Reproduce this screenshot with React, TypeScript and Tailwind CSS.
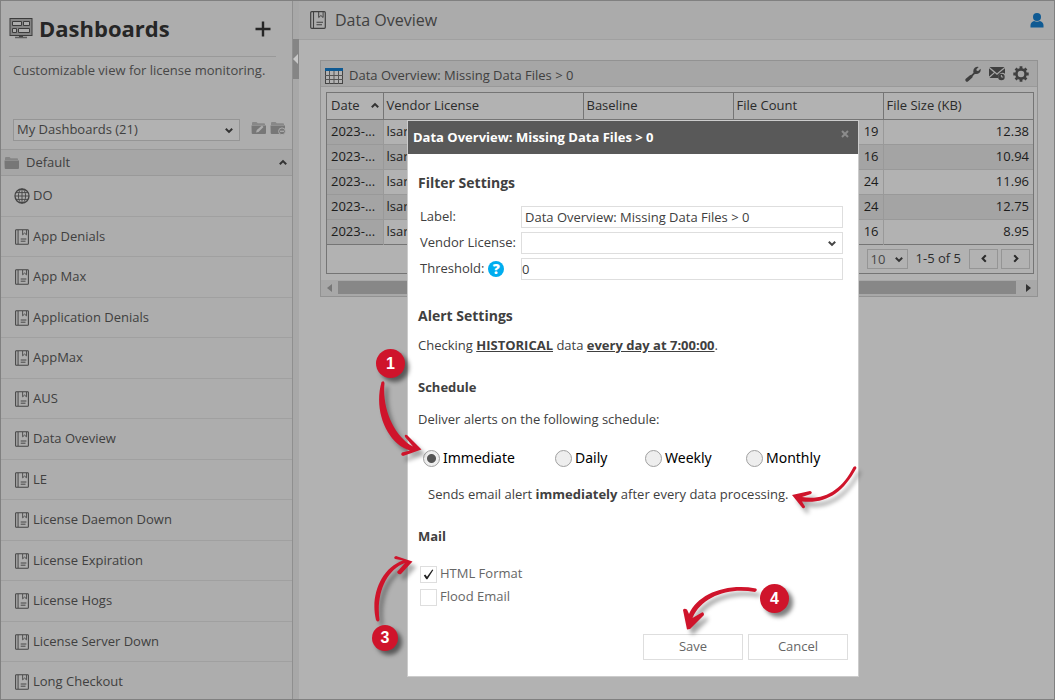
import { useState } from "react";
import type { ReactNode } from "react";

const dashboards = [
  "DO",
  "App Denials",
  "App Max",
  "Application Denials",
  "AppMax",
  "AUS",
  "Data Oveview",
  "LE",
  "License Daemon Down",
  "License Expiration",
  "License Hogs",
  "License Server Down",
  "Long Checkout",
];

const rows = [
  { count: 19, size: "12.38" },
  { count: 16, size: "10.94" },
  { count: 24, size: "11.96" },
  { count: 24, size: "12.75" },
  { count: 16, size: "8.95" },
];

function BookIcon({ className }: { className: string }) {
  return (
    <svg viewBox="0 0 16 18" className={className} fill="none" stroke="currentColor">
      <rect x="0.7" y="0.7" width="14.6" height="16.6" rx="1" strokeWidth="1.2" />
      <path d="M3.5 1v16" strokeWidth="1.1" />
      <path d="M8.7 1v5.500l2.200-2 2.200 2V1" />
      <path d="M6.500 11.3h6.500M6.500 13.8h5.500" strokeWidth="1.1" />
    </svg>
  );
}

function GlobeIcon() {
  return (
    <svg viewBox="0 0 16 16" className="size-4" fill="none" stroke="currentColor" strokeWidth="0.9">
      <circle cx="8" cy="8" r="7" strokeWidth="1.3" />
      <ellipse cx="8" cy="8" rx="3.6" ry="7" />
      <path d="M8 1v14M1 8h14M2 4.6h12M2 11.4h12" />
    </svg>
  );
}

function DashboardIcon() {
  return (
    <svg viewBox="0 0 24 21" className="h-[21px] w-6 shrink-0">
      <rect x="1" y="0.5" width="22" height="17" fill="#858585" stroke="#3c3c3c" />
      <path
        d="M3.500 3.500h9v4h-9zM14.500 3.500h6v4h-6zM3.500 10.500h4v4h-4zM9.500 10.500h11v4h-11z"
        fill="#adadad"
        stroke="#3c3c3c"
      />
      <path d="M10 17.500h4v1.500h-4z" fill="#3c3c3c" />
      <path d="M6 19.500h12" stroke="#5c5c5c" strokeWidth="1.500" />
    </svg>
  );
}

function FolderIcon({ badge }: { badge?: ReactNode }) {
  return (
    <svg viewBox="0 0 16 14" className="h-[14px] w-4" fill="currentColor">
      <path d="M1 4V2q0-1 1-1h3.500l1.200 1.300h6.300q1 0 1 1V4z" opacity="0.7" />
      <path d="M0.500 4.500h14.500v7.500q0 1-1 1H1.700q-1 0-1-1z" />
      {badge}
    </svg>
  );
}

function Chevron({ className }: { className: string }) {
  return (
    <svg viewBox="0 0 8 6" className={className} fill="none" stroke="currentColor" strokeWidth="2">
      <path d="M0.800 1.200 4 4.400 7.200 1.200" />
    </svg>
  );
}

function WrenchIcon() {
  return (
    <svg viewBox="0 0 16 16" className="size-4" fill="currentColor">
      <path d="M0.800 15.200q-1-1.200 0-2.400L5 9.200l1.500-0.400 2-2q-0.800-3 1.300-5Q11.500 0.300 13.700 0.900L11.400 3.200l0.300 1.500 1.500 0.300 2.300-2.300q0.700 2.300-1 4-1.900 1.800-4.700 1.200l-2 2-0.400 1.500-4.200 3.800q-1.200 1-2.400 0z" />
    </svg>
  );
}

function MailClockIcon() {
  return (
    <svg viewBox="0 0 16 15" className="h-[15px] w-4">
      <path d="M0.500 1h15L8 7.200z" fill="#3f3f3f" />
      <path d="M0 2.200 4.900 6.400 0 10.500zM5.800 7.100 8 8.900l2.200-1.800L16 2.200v5.500a4.300 4.300 0 0 0-6.800 4.300H0.500z" fill="#3f3f3f" />
      <circle cx="12.400" cy="11" r="3.300" fill="#3f3f3f" />
      <path d="M12.400 9v2h1.800" stroke="#a6a6a6" fill="none" />
    </svg>
  );
}

function GearIcon() {
  return (
    <svg viewBox="0 0 16 16" className="size-4" fill="none" stroke="currentColor">
      <circle cx="8" cy="8" r="4.600" strokeWidth="2.600" />
      <path
        d="M8 0.300v2.500M8 13.200v2.500M0.300 8h2.500M13.200 8h2.500M2.600 2.600l1.700 1.700M11.700 11.700l1.700 1.700M2.600 13.400l1.700-1.700M11.700 4.300l1.700-1.700"
        strokeWidth="2.800"
      />
    </svg>
  );
}

function Sidebar() {
  return (
    <aside className="flex w-[292px] shrink-0 flex-col overflow-hidden border-r border-[#8f8f8f] bg-[#adadad]">
      <div className="mr-4 ml-2 flex h-14 shrink-0 items-center border-b border-[#999] pr-[5px] text-[#262626]">
        <DashboardIcon />
        <h1 className="ml-[6px] flex-1 text-[22px] font-bold">Dashboards</h1>
        <button aria-label="Add dashboard" className="p-0">
          <svg viewBox="0 0 16 16" className="size-4" stroke="currentColor" strokeWidth="2.400">
            <path d="M8 0.500v15M0.500 8h15" />
          </svg>
        </button>
      </div>
      <p className="px-3 pt-[3px] leading-5 text-[#474747]">Customizable view for license monitoring.</p>
      <div className="mt-[39px] flex shrink-0 items-center pb-2 pl-3">
        <div className="relative w-[227px] shrink-0">
          <select aria-label="Dashboard group" className="block h-[22px] w-full appearance-none border border-[#959595] bg-[#b2b2b2] px-[3px]">
            <option>My Dashboards (21)</option>
          </select>
          <Chevron className="pointer-events-none absolute top-2 right-[7px] h-[7px] w-2 text-[#333]" />
        </div>
        <div className="mb-1 ml-[11px] flex shrink-0 gap-[3px] text-[#777]">
          <button aria-label="Edit folder">
            <FolderIcon badge={<path d="m5 11.500 0.800-2.500L11 4.500l1.500 1.500-5 5z" fill="#adadad" />} />
          </button>
          <button aria-label="Remove folder">
            <FolderIcon
              badge={
                <>
                  <circle cx="12" cy="10.300" r="3.400" fill="#777" stroke="#adadad" />
                  <path d="M10 10.300h4" stroke="#adadad" strokeWidth="1.200" />
                </>
              }
            />
          </button>
        </div>
      </div>
      <button className="flex h-[27px] shrink-0 items-center border-y border-[#999] bg-[#a6a6a6] pr-[5px] pl-[3px] text-left">
        <span className="text-[#777]">
          <FolderIcon />
        </span>
        <span className="ml-[6px] flex-1">Default</span>
        <Chevron className="h-[7px] w-2 rotate-180 text-[#333]" />
      </button>
      <ul>
        {dashboards.map((name, i) => (
          <li key={name} className="border-b border-[#a0a0a0] odd:h-[41px] even:h-10">
            <a href="#" className="flex h-full items-center gap-[3px] pl-[13px]">
              <span className="flex w-4 justify-center text-[#444]">
                {i === 0 ? <GlobeIcon /> : <BookIcon className="h-4 w-[14px]" />}
              </span>
              {name}
            </a>
          </li>
        ))}
      </ul>
    </aside>
  );
}

function Widget() {
  return (
    <section className="mt-5 mr-4 ml-[21px] border border-[#929292]">
      <header className="flex h-[26px] items-center border-b border-[#999] bg-[#a6a6a6] pr-2 pl-1 text-[#404040]">
        <svg viewBox="0 0 18 16" className="mt-1 h-4 w-[18px]">
          <rect x="0.500" y="0.500" width="17" height="15" fill="#b2b2b2" stroke="#444" />
          <path d="M0 7.500h18M0 11.500h18M4.500 3v13M9 3v13M13.500 3v13" stroke="#555" />
          <rect width="18" height="3" fill="#0f5a93" />
        </svg>
        <h2 className="ml-[6px] flex-1 pt-1">Data Overview: Missing Data Files &gt; 0</h2>
        <div className="flex items-center gap-2 text-[#3f3f3f]">
          <button aria-label="Configure"><WrenchIcon /></button>
          <button aria-label="Mail alerts"><MailClockIcon /></button>
          <button aria-label="Settings"><GearIcon /></button>
        </div>
      </header>
      <div className="mt-[5px] mr-[3px] mb-[6px] ml-[5px] border border-[#757575]">
        <table className="w-full table-fixed border-collapse">
          <colgroup>
            <col className="w-14" />
            <col className="w-[200px]" />
            <col />
            <col />
            <col />
          </colgroup>
          <thead>
            <tr className="h-[26px] border-b border-[#757575] text-left text-[#2b2b2b]">
              <th className="border-r border-[#757575] px-1 font-normal">
                <span className="flex items-center justify-between">
                  Date
                  <Chevron className="h-[7px] w-2 rotate-180 text-[#333]" />
                </span>
              </th>
              <th className="border-r border-[#757575] px-[3px] font-normal">Vendor License</th>
              <th className="border-r border-[#757575] px-[3px] font-normal">Baseline</th>
              <th className="border-r border-[#757575] px-[3px] font-normal">File Count</th>
              <th className="px-[3px] font-normal">File Size (KB)</th>
            </tr>
          </thead>
          <tbody className="text-[#1c1c1c]">
            {rows.map((row, i) => (
              <tr key={i} className="h-[25px] border-b border-[#999] last:border-[#757575] even:bg-[#a4a4a4]">
                <td className="border-r border-[#999] bg-[#a4a4a4] px-1">2023-...</td>
                <td className="border-r border-[#999] px-[3px]">lsar</td>
                <td className="border-r border-[#999] px-[3px]" />
                <td className="border-r border-[#999] px-1 text-right">{row.count}</td>
                <td className="px-1 text-right">{row.size}</td>
              </tr>
            ))}
          </tbody>
        </table>
        <div className="flex h-7 items-center justify-end pr-[3px] text-[#2b2b2b]">
          <label htmlFor="page-size" className="mr-2">Page Size:</label>
          <div className="relative mr-2">
            <select id="page-size" className="block h-5 w-[41px] appearance-none border border-[#959595] px-[3px] text-[#474747]">
              <option>10</option>
            </select>
            <Chevron className="pointer-events-none absolute top-[7px] right-[5px] h-[7px] w-2 text-[#333]" />
          </div>
          <span className="mr-2">1-5 of 5</span>
          <button aria-label="Previous page" className="mr-[3px] flex h-5 w-[29px] items-center justify-center border border-[#959595]">
            <Chevron className="h-[7px] w-2 rotate-90" />
          </button>
          <button aria-label="Next page" className="flex h-5 w-[29px] items-center justify-center border border-[#959595]">
            <Chevron className="h-[7px] w-2 -rotate-90" />
          </button>
        </div>
      </div>
      <div className="flex h-4 items-center gap-[6px] bg-[#a8a8a8] px-[6px]">
        <svg viewBox="0 0 5 8" className="h-2 w-[5px]"><path d="M5 0v8L0 4z" fill="#777" /></svg>
        <div className="h-[13px] flex-1 bg-[#878787]" />
        <svg viewBox="0 0 5 8" className="ml-1 h-2 w-[5px]"><path d="M0 0v8l5-4z" fill="#333" /></svg>
      </div>
    </section>
  );
}

const schedules = [
  { name: "Immediate", width: "w-[132px]" },
  { name: "Daily", width: "w-[90px]" },
  { name: "Weekly", width: "w-[101px]" },
  { name: "Monthly", width: "w-[90px]" },
];

function AlertDialog() {
  const [label, setLabel] = useState("Data Overview: Missing Data Files > 0");
  const [threshold, setThreshold] = useState("0");
  const [schedule, setSchedule] = useState("Immediate");
  const [html, setHtml] = useState(true);
  const [flood, setFlood] = useState(false);

  return (
    <div role="dialog" aria-labelledby="dialog-title" className="absolute top-[120px] left-[407px] w-[452px] border border-[#ccc] bg-white">
      <div className="flex h-[33px] items-center justify-between bg-[#595959] pr-[9px] pl-[5px]">
        <h2 id="dialog-title" className="font-bold text-white">Data Overview: Missing Data Files &gt; 0</h2>
        <button aria-label="Close">
          <svg viewBox="0 0 8 8" className="mb-2 size-2" stroke="#8c8c8c" strokeWidth="2"><path d="m1 1 6 6M7 1 1 7" /></svg>
        </button>
      </div>
      <div className="px-[10px] pt-[19px] pb-4">
        <h3 className="text-sm leading-5 font-bold">Filter Settings</h3>
        <div className="mt-[13px] mr-[5px] ml-[2px] grid grid-cols-[101px_1fr] items-center gap-y-1">
          <label htmlFor="label">Label:</label>
          <input id="label" value={label} onChange={(e) => setLabel(e.target.value)} className="h-[22px] border border-[#dedede] px-[3px]" />
          <label htmlFor="vendor">Vendor License:</label>
          <div className="relative">
            <select id="vendor" className="block h-[22px] w-full appearance-none border border-[#dedede] px-[3px]">
              <option></option>
            </select>
            <Chevron className="pointer-events-none absolute top-2 right-[7px] h-[7px] w-2 text-[#444]" />
          </div>
          <div className="flex items-center gap-1">
            <label htmlFor="threshold">Threshold:</label>
            <span className="flex size-4 items-center justify-center rounded-full bg-[#00adef] text-sm font-extrabold text-white">?</span>
          </div>
          <input id="threshold" value={threshold} onChange={(e) => setThreshold(e.target.value)} className="h-[22px] border border-[#dedede]" />
        </div>
        <h3 className="mt-[26px] text-sm leading-5 font-bold">Alert Settings</h3>
        <p className="mt-[9px] leading-5">
          Checking <b className="underline">HISTORICAL</b> data <b className="underline">every day at 7:00:00</b>.
        </p>
        <h3 className="mt-[22px] leading-5 font-bold">Schedule</h3>
        <p className="mt-3 leading-5">Deliver alerts on the following schedule:</p>
        <div className="mt-[19px] ml-[5px] flex font-['Noto_Sans',sans-serif] text-sm text-black">
          {schedules.map(({ name, width }) => (
            <label key={name} className={`flex items-center gap-[3px] leading-5 ${width}`}>
              <input
                type="radio"
                name="schedule"
                checked={schedule === name}
                onChange={() => setSchedule(name)}
                className="size-[17px] shrink-0 appearance-none rounded-full border border-[#a0a0a0] bg-[#eee] checked:bg-[radial-gradient(circle,#555_4px,#eee_5px)]"
              />
              {name}
            </label>
          ))}
        </div>
        <p className="mt-4 ml-[10px] leading-5">
          Sends email alert <b>immediately</b> after every data processing.
        </p>
        <h3 className="mt-[22px] leading-5 font-bold">Mail</h3>
        <div className="mt-[18px] ml-[2px] flex flex-col gap-[3px] text-[#666]">
          <div className="flex h-5 items-center gap-[3px]">
            <div className="relative size-[17px]">
              <input id="html" type="checkbox" checked={html} onChange={() => setHtml(!html)} className="block size-[17px] appearance-none border border-[#dedede]" />
              {html && (
                <svg viewBox="0 0 17 17" className="pointer-events-none absolute inset-0" fill="#222">
                  <path d="m3.800 9.500 1.500-1 1.700 2.300L12.300 3.500l1 0.500L7.400 13.300H6.300z" />
                </svg>
              )}
            </div>
            <label htmlFor="html">HTML Format</label>
          </div>
          <div className="flex h-5 items-center gap-[3px]">
            <input id="flood" type="checkbox" checked={flood} onChange={() => setFlood(!flood)} className="size-[17px] appearance-none border border-[#dedede]" />
            <label htmlFor="flood">Flood Email</label>
          </div>
        </div>
        <div className="mt-[27px] flex justify-end gap-[5px] text-[#666]">
          <button className="h-[26px] w-[100px] border border-[#dedede]">Save</button>
          <button className="h-[26px] w-[100px] border border-[#dedede]">Cancel</button>
        </div>
      </div>
    </div>
  );
}

// numbered callouts and arrows drawn over the dialog
function Callouts() {
  return (
    <div className="pointer-events-none absolute inset-0 font-['Liberation_Sans',sans-serif] text-base font-bold text-white">
      <svg viewBox="0 0 1055 700" className="absolute top-0 left-0 h-[700px] w-[1055px] drop-shadow-[4px_5px_2px_rgba(0,0,0,0.35)]" fill="#cf142b">
        <path d="M381.500 382Q384 380 384.500 383C382 409 394 436 413 446.500L405 437Q404 434 407 435L421.500 449.500L403 456Q400 455 402 452.500L410 450.500C388 444 373 412 381.500 382Z" />
        <path d="M853.500 467Q856 465 856.500 468C843 493 826 504 802 501.500L805 506.500Q805 509 802.500 508L792 495L810 491Q813 492 811 494L802 497C824 501 842 490 853.500 467Z" />
        <path d="M376 620Q378 623 379.500 620C376 594 386 570 405 563L397 572Q398 575 401 574L412.500 561.500L396 556Q393 557 395 559L403 560.500C381 568 370 596 376 620Z" />
        <path d="M755 592Q758 590 756 588.500C726 583 698 594 689 614L687 609.500Q684 608 683 610L687 629.500L690 629L704 615Q704 611 701 613L692.500 618C702 596 729 587 755 592Z" />
      </svg>
      <span className="absolute top-[349px] left-[376px] flex size-[29px] items-center justify-center rounded-full bg-[#cf142b] shadow-[4px_4px_4px_rgba(0,0,0,0.5)]">1</span>
      <span className="absolute top-[625px] left-[372px] flex size-[26px] items-center justify-center rounded-full bg-[#cf142b] shadow-[4px_4px_4px_rgba(0,0,0,0.5)]">3</span>
      <span className="absolute top-[584px] left-[760px] flex size-[29px] items-center justify-center rounded-full bg-[#cf142b] shadow-[4px_4px_4px_rgba(0,0,0,0.5)]">4</span>
    </div>
  );
}

export default function App() {
  return (
    <div className="relative flex h-screen overflow-hidden font-['Open_Sans',sans-serif] text-[13px] text-[#404040]">
      <div className="flex min-w-0 flex-1 border border-[#808080] bg-[#b2b2b2]">
        <Sidebar />
        <div className="w-[6px] shrink-0 bg-[#a8a8a8] pt-[38px]">
          <button aria-label="Collapse sidebar" className="flex h-10 w-full items-center bg-[#858585]">
            <svg viewBox="0 0 5 10" className="h-[10px] w-[5px]"><path d="M5 0v10L0 5z" fill="#c8c8c8" /></svg>
          </button>
        </div>
        <main className="min-w-0 flex-1">
          <header className="flex h-[39px] items-center border-b border-[#a0a0a0] bg-[#ababab] pr-[10px] pl-[11px]">
            <BookIcon className="h-[18px] w-4" />
            <h1 className="ml-[9px] flex-1 text-base">Data Oveview</h1>
            <button aria-label="Account">
              <svg viewBox="0 0 14 15" className="h-[15px] w-[14px]" fill="#0f5a93">
                <circle cx="7" cy="4" r="4" />
                <path d="M0.500 14.500v-2Q0.500 9 4 8q3 1.500 6 0 3.500 1 3.500 4.500v2z" />
              </svg>
            </button>
          </header>
          <Widget />
        </main>
      </div>
      <AlertDialog />
      <Callouts />
    </div>
  );
}
